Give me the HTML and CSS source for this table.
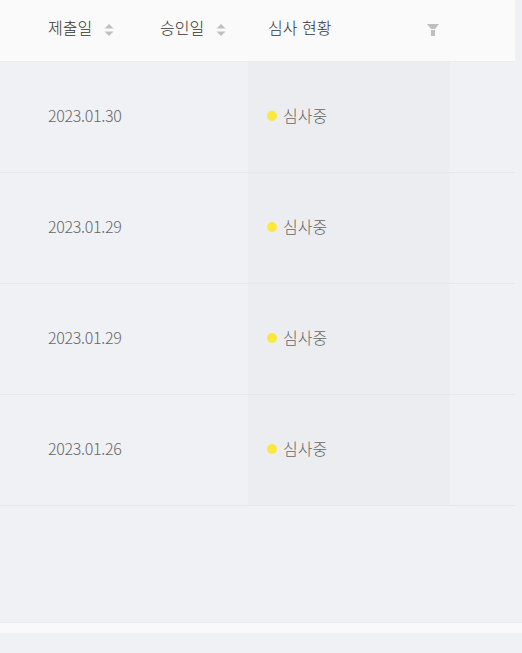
FILE: index.html
```html
<!DOCTYPE html>
<html lang="ko">
<head>
<meta charset="utf-8">
<link rel="stylesheet" href="styles.css">
</head>
<body>
<div class="page">
  <table class="table">
    <colgroup>
      <col class="c1"><col class="c2"><col class="c3"><col class="c4">
    </colgroup>
    <thead>
      <tr>
        <th class="th th1"><span class="th-in"><span class="th-label">제출일</span><span class="sorter"><svg width="10" height="16" viewBox="0 0 10 16"><path d="M5 2 L9.5 6.5 L0.5 6.5 Z" fill="#bfbfbf"/><path d="M5 14 L9.5 9.5 L0.5 9.5 Z" fill="#bfbfbf"/></svg></span></span></th>
        <th class="th th2"><span class="th-in"><span class="th-label">승인일</span><span class="sorter"><svg width="10" height="16" viewBox="0 0 10 16"><path d="M5 2 L9.5 6.5 L0.5 6.5 Z" fill="#bfbfbf"/><path d="M5 14 L9.5 9.5 L0.5 9.5 Z" fill="#bfbfbf"/></svg></span></span></th>
        <th class="th th3"><span class="th-in th-filter">심사 현황<svg class="filter" width="12" height="12" viewBox="0 0 12 12"><path d="M0 0 H12 L8 5 H4 Z" fill="#bfbfbf"/><rect x="4" y="6" width="4" height="6" fill="#bfbfbf"/></svg></span></th>
        <th class="th th4"></th>
      </tr>
    </thead>
    <tbody>
      <tr class="row"><td class="td td1">2023.01.30</td><td class="td"></td><td class="td td3"><span class="status"><span class="dot"></span>심사중</span></td><td class="td"></td></tr>
      <tr class="row"><td class="td td1">2023.01.29</td><td class="td"></td><td class="td td3"><span class="status"><span class="dot"></span>심사중</span></td><td class="td"></td></tr>
      <tr class="row"><td class="td td1">2023.01.29</td><td class="td"></td><td class="td td3"><span class="status"><span class="dot"></span>심사중</span></td><td class="td"></td></tr>
      <tr class="row"><td class="td td1">2023.01.26</td><td class="td"></td><td class="td td3"><span class="status"><span class="dot"></span>심사중</span></td><td class="td"></td></tr>
    </tbody>
  </table>
  <div class="spacer"></div>
  <div class="strip"></div>
</div>
</body>
</html>
```
FILE: styles.css
```css
html, body {
  margin: 0;
  padding: 0;
  background: #f0f1f5;
  font-family: "Noto Sans CJK KR", "Noto Sans", sans-serif;
}
.page {
  width: 522px;
  height: 653px;
  overflow: hidden;
}
.table {
  width: 515px;
  border-collapse: collapse;
  table-layout: fixed;
}
.c1 { width: 144px; }
.c2 { width: 104px; }
.c3 { width: 202px; }
.c4 { width: 65px; }
.th {
  height: 61px;
  padding: 0;
  background: #fafafa;
  border-bottom: 1px solid #ebecef;
  text-align: left;
  font-weight: 300;
  font-size: 16px;
  color: #333;
  vertical-align: middle;
}
.th1 { padding-left: 48px; }
.th2 { padding-left: 16px; }
.th3 { padding-left: 20px; padding-right: 11px; }
.th-in {
  display: flex;
  align-items: center;
  line-height: 20px;
  margin-top: -8px;
}
.th-label {
  width: 56px;
}
.th-filter {
  justify-content: space-between;
}
.sorter {
  display: flex;
  margin-top: 6px;
}
.filter {
  margin-top: 6px;
}
.td {
  height: 111px;
  padding: 0;
  border-bottom: 1px solid #e6e7eb;
  font-size: 16px;
  font-weight: 300;
  color: #666;
  vertical-align: middle;
  box-sizing: border-box;
}
.td1 {
  padding-left: 48px;
  letter-spacing: -0.3px;
  padding-bottom: 5px;
}
.td3 {
  padding-left: 19px;
  padding-bottom: 5px;
  background: #ecedf1;
}
.status {
  display: flex;
  align-items: center;
  gap: 6px;
}
.dot {
  width: 10px;
  height: 10px;
  border-radius: 50%;
  background: #fae83c;
  margin-top: 2px;
}
.spacer {
  height: 116px;
  border-bottom: 1px solid #ebecef;
}
.strip {
  height: 10px;
  background: #f9f9f9;
}
```
